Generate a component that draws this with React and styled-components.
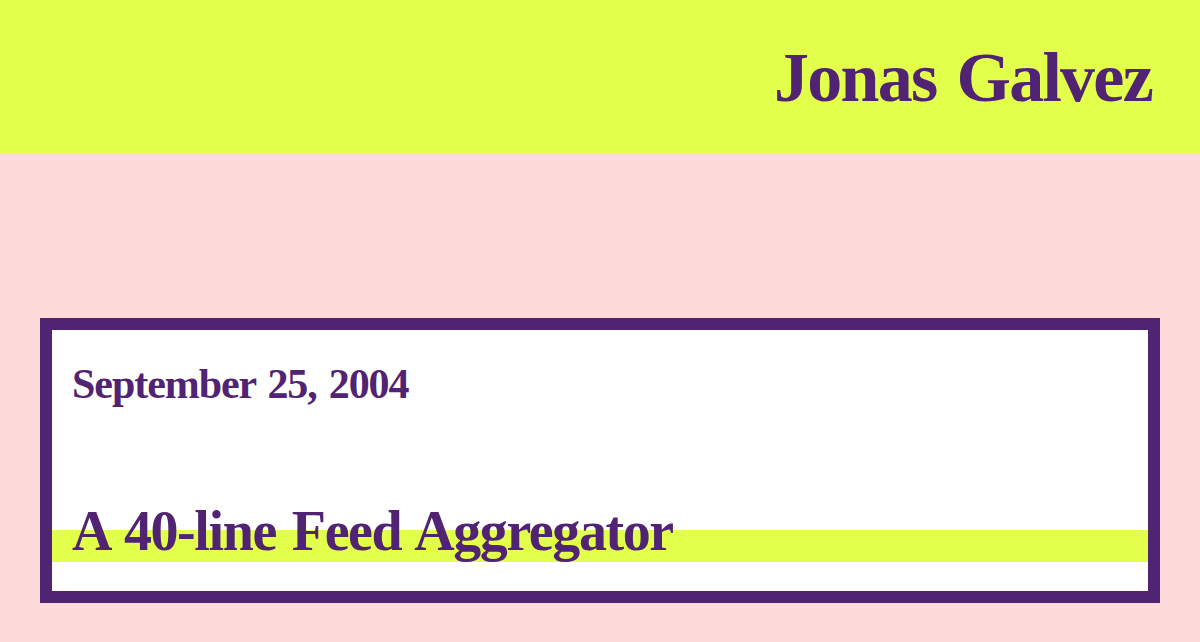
import React from "react";
import styled, { createGlobalStyle } from "styled-components";

const purple = "#512373";
const lime = "#e1ff4b";

const GlobalStyle = createGlobalStyle`
  html, body {
    margin: 0;
    padding: 0;
    background: #ffdada;
  }
  body {
    font-family: "Liberation Serif", "Times New Roman", serif;
    color: ${purple};
  }
`;

const Header = styled.header`
  background: ${lime};
  height: 153px;
  box-sizing: border-box;
  padding: 43px 48px 0 0;
  text-align: right;
`;

const SiteTitle = styled.h1`
  margin: 0;
  font-size: 70px;
  line-height: 70px;
  font-weight: bold;
  letter-spacing: -0.025em;
  word-spacing: 0.06em;
`;

const Main = styled.main`
  padding: 165px 40px 0;
`;

const Entry = styled.article`
  background: #fff;
  border: 12px solid ${purple};
  padding: 33px 0 29px;
`;

const EntryDate = styled.h3`
  margin: 0 0 98px;
  padding-left: 20px;
  font-size: 42px;
  line-height: 42px;
  font-weight: bold;
  letter-spacing: -0.025em;
  word-spacing: 0.06em;
`;

const EntryTitle = styled.h2`
  margin: 0;
  padding: 0 0 3px 20px;
  font-size: 56px;
  line-height: 56px;
  font-weight: bold;
  letter-spacing: -0.025em;
  word-spacing: 0.06em;
  background: linear-gradient(to bottom, transparent 27px, ${lime} 27px);
`;

export default function App() {
  return (
    <>
      <GlobalStyle />
      <Header>
        <SiteTitle>Jonas Galvez</SiteTitle>
      </Header>
      <Main>
        <Entry>
          <EntryDate>September 25, 2004</EntryDate>
          <EntryTitle>A 40-line Feed Aggregator</EntryTitle>
        </Entry>
      </Main>
    </>
  );
}
